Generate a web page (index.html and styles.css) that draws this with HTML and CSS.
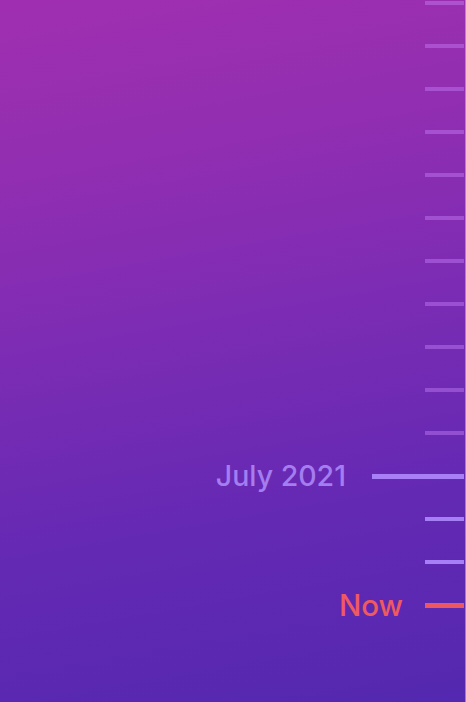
FILE: index.html
```html
<!DOCTYPE html>
<html>
<head>
<meta charset="utf-8">
<link rel="stylesheet" href="styles.css">
</head>
<body>
<div class="screen">
  <div class="ruler">
    <div class="row"><span class="tick faint"></span></div>
    <div class="row"><span class="tick faint"></span></div>
    <div class="row"><span class="tick faint"></span></div>
    <div class="row"><span class="tick faint"></span></div>
    <div class="row"><span class="tick faint"></span></div>
    <div class="row"><span class="tick faint"></span></div>
    <div class="row"><span class="tick faint"></span></div>
    <div class="row"><span class="tick faint"></span></div>
    <div class="row"><span class="tick faint"></span></div>
    <div class="row"><span class="tick faint"></span></div>
    <div class="row"><span class="tick faint"></span></div>
    <div class="row"><span class="label month">July 2021</span><span class="tick major"></span></div>
    <div class="row"><span class="tick bright"></span></div>
    <div class="row"><span class="tick bright"></span></div>
    <div class="row"><span class="label now">Now</span><span class="tick nowtick"></span></div>
  </div>
</div>
</body>
</html>
```
FILE: styles.css
```css
html, body {
  margin: 0;
  padding: 0;
}
body {
  width: 466px;
  height: 702px;
  overflow: hidden;
  font-family: Inter, "Liberation Sans", Arial, sans-serif;
}
.screen {
  width: 466px;
  height: 702px;
  box-sizing: border-box;
  border-right: 1px solid rgba(230, 180, 255, 0.55);
  background: linear-gradient(170deg, #a02fb0 0%, #922eb1 22%, #7d2cb4 45%, #6429b3 72%, #5428b0 100%);
  overflow: hidden;
}
.ruler {
  margin-top: -18.5px;
  display: flex;
  flex-direction: column;
}
.row {
  height: 43px;
  display: flex;
  justify-content: flex-end;
  align-items: center;
  padding-right: 1px;
}
.tick {
  display: block;
  width: 39px;
  height: 4px;
}
.faint {
  background: rgba(200, 130, 250, 0.42);
}
.bright {
  background: #a67ef6;
}
.major {
  width: 92px;
  height: 5px;
  background: #a97ff7;
}
.nowtick {
  height: 5px;
  background: #ec5760;
}
.label {
  white-space: nowrap;
  font-weight: 500;
}
.month {
  font-size: 28.5px;
  color: #a47df0;
  margin-right: 26px;
  margin-top: -2px;
}
.now {
  font-size: 29.5px;
  color: #ee5a60;
  margin-right: 22px;
}
```
